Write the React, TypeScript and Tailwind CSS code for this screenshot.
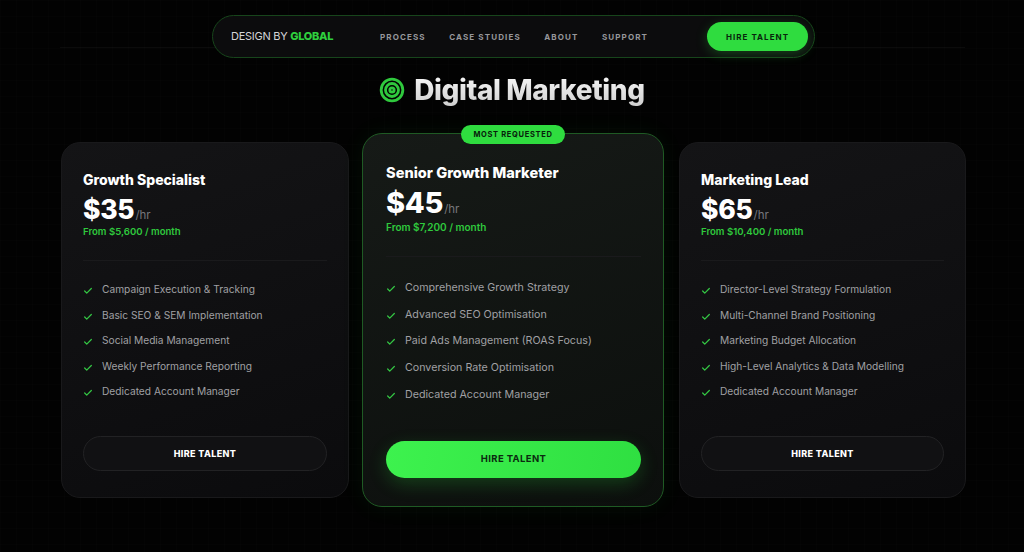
import React from 'react';
import { Check, Target } from 'lucide-react';

const plans = [
  {
    name: 'Growth Specialist',
    price: '$35',
    from: 'From $5,600 / month',
    features: [
      'Campaign Execution & Tracking',
      'Basic SEO & SEM Implementation',
      'Social Media Management',
      'Weekly Performance Reporting',
      'Dedicated Account Manager',
    ],
  },
  {
    name: 'Senior Growth Marketer',
    price: '$45',
    from: 'From $7,200 / month',
    featured: true,
    features: [
      'Comprehensive Growth Strategy',
      'Advanced SEO Optimisation',
      'Paid Ads Management (ROAS Focus)',
      'Conversion Rate Optimisation',
      'Dedicated Account Manager',
    ],
  },
  {
    name: 'Marketing Lead',
    price: '$65',
    from: 'From $10,400 / month',
    features: [
      'Director-Level Strategy Formulation',
      'Multi-Channel Brand Positioning',
      'Marketing Budget Allocation',
      'High-Level Analytics & Data Modelling',
      'Dedicated Account Manager',
    ],
  },
];

const PlanCard = ({ plan, className }: any) => {
  const featured = plan.featured;
  return (
    <div
      className={`relative flex flex-col border ${
        featured
          ? 'h-[374px] rounded-[20px] border-[#1f5a24] bg-[linear-gradient(160deg,#161a17,#0c0f0d)] pl-[23px] pr-[22px] pt-[29px] shadow-[0_0_24px_rgba(45,230,60,0.06)]'
          : 'h-[356px] rounded-[19px] border-[#19191b] bg-[linear-gradient(160deg,#141416,#0b0b0d)] px-[21px] pt-[27px]'
      } ${className}`}
    >
      {featured && (
        <div className="absolute left-[98px] top-[-9px] flex h-[19px] w-[104px] items-center justify-center rounded-full bg-[#2fdc3f] text-[7.5px] font-bold tracking-[0.09em] text-[#07210b]">
          MOST REQUESTED
        </div>
      )}
      <h3 className={`font-extrabold leading-[20px] text-white ${featured ? 'text-[14.6px]' : 'text-[14px]'}`}>
        {plan.name}
      </h3>
      <div className={`flex items-baseline leading-[34px] ${featured ? 'mt-[3px] h-[34px]' : 'mt-[2px] h-[33px]'}`}>
        <span className={`font-extrabold tracking-[-0.01em] text-white ${featured ? 'text-[29px]' : 'text-[26.5px]'}`}>{plan.price}</span>
        <span className="ml-[1px] text-[11.5px] text-[#77777c]">/hr</span>
      </div>
      <div className={`font-semibold leading-[14px] text-[#2fc93d] ${featured ? 'text-[10px]' : 'text-[9.6px]'}`}>
        {plan.from}
      </div>
      <div className={`h-px bg-[#1a1a1c] ${featured ? 'mt-[22px]' : 'mt-[21px]'}`} />
      <ul className={`flex flex-col ${featured ? 'mt-[21px] gap-[6.7px]' : 'mt-[19px] gap-[5.5px]'}`}>
        {plan.features.map((f: string) => (
          <li key={f} className="flex h-[20px] items-center text-[#a0a0a4]">
            <Check size={10} strokeWidth={3} className="mt-[2px] shrink-0 text-[#34c744]" />
            <span className={featured ? 'ml-[9px] text-[10.7px]' : 'ml-[9px] text-[10.2px]'}>{f}</span>
          </li>
        ))}
      </ul>
      {featured ? (
        <button className="mt-[36px] h-[37px] w-full rounded-full bg-[linear-gradient(100deg,#3df24e,#2fdf41)] text-[9.5px] font-bold tracking-[0.04em] text-[#0b2a10] shadow-[0_6px_18px_rgba(47,223,65,0.22)]">
          HIRE TALENT
        </button>
      ) : (
        <button className="mt-[34px] h-[35px] w-full rounded-full border border-[#222224] bg-[#111113] text-[9px] font-extrabold tracking-[0.04em] text-white">
          HIRE TALENT
        </button>
      )}
    </div>
  );
};

export default function App() {
  return (
    <div className="relative h-[552px] w-[1024px] overflow-hidden bg-[#020202] bg-[linear-gradient(rgba(255,255,255,0.008)_1px,transparent_1px),linear-gradient(90deg,rgba(255,255,255,0.008)_1px,transparent_1px)] bg-[size:16px_16px] pt-[15px] font-['Inter','Liberation_Sans',sans-serif]">
      {/* faint rule behind the nav */}
      <div className="absolute left-[60px] top-[47px] h-px w-[905px] bg-white/[0.035]" />

      <nav className="relative ml-[212px] flex h-[43px] w-[603px] items-center rounded-full border border-[#17451b] bg-[#0c0c0d] pl-[18px] pr-[6px]">
        <div className="w-[149px] whitespace-nowrap text-[11px] tracking-[-0.025em] text-[#d4d4d6]">
          DESIGN BY <span className="font-extrabold text-[#2fd03e]">GLOBAL</span>
        </div>
        <div className="flex gap-[23.5px] text-[8px] font-bold tracking-[0.14em] text-[#97979b]">
          <span>PROCESS</span>
          <span>CASE STUDIES</span>
          <span>ABOUT</span>
          <span>SUPPORT</span>
        </div>
        <button className="ml-auto h-[29px] w-[101px] rounded-full bg-[#2fdc3f] text-[8px] font-bold tracking-[0.13em] text-[#08260c] shadow-[0_3px_12px_rgba(47,220,63,0.25)]">
          HIRE TALENT
        </button>
      </nav>

      <div className="mt-[14px] flex h-[36px] items-center justify-center gap-[9px]">
        <Target size={26} strokeWidth={2.6} className="text-[#2fc93d]" />
        <h1 className="bg-[linear-gradient(180deg,#ffffff,#c9c9c9)] bg-clip-text text-[28px] font-extrabold tracking-[-0.015em] text-transparent">
          Digital Marketing
        </h1>
      </div>

      <div className="ml-[61px] mt-[25px] flex items-center">
        <PlanCard plan={plans[0]} className="w-[288px]" />
        <PlanCard plan={plans[1]} className="ml-[13px] w-[302px]" />
        <PlanCard plan={plans[2]} className="ml-[15px] w-[287px]" />
      </div>
    </div>
  );
}
